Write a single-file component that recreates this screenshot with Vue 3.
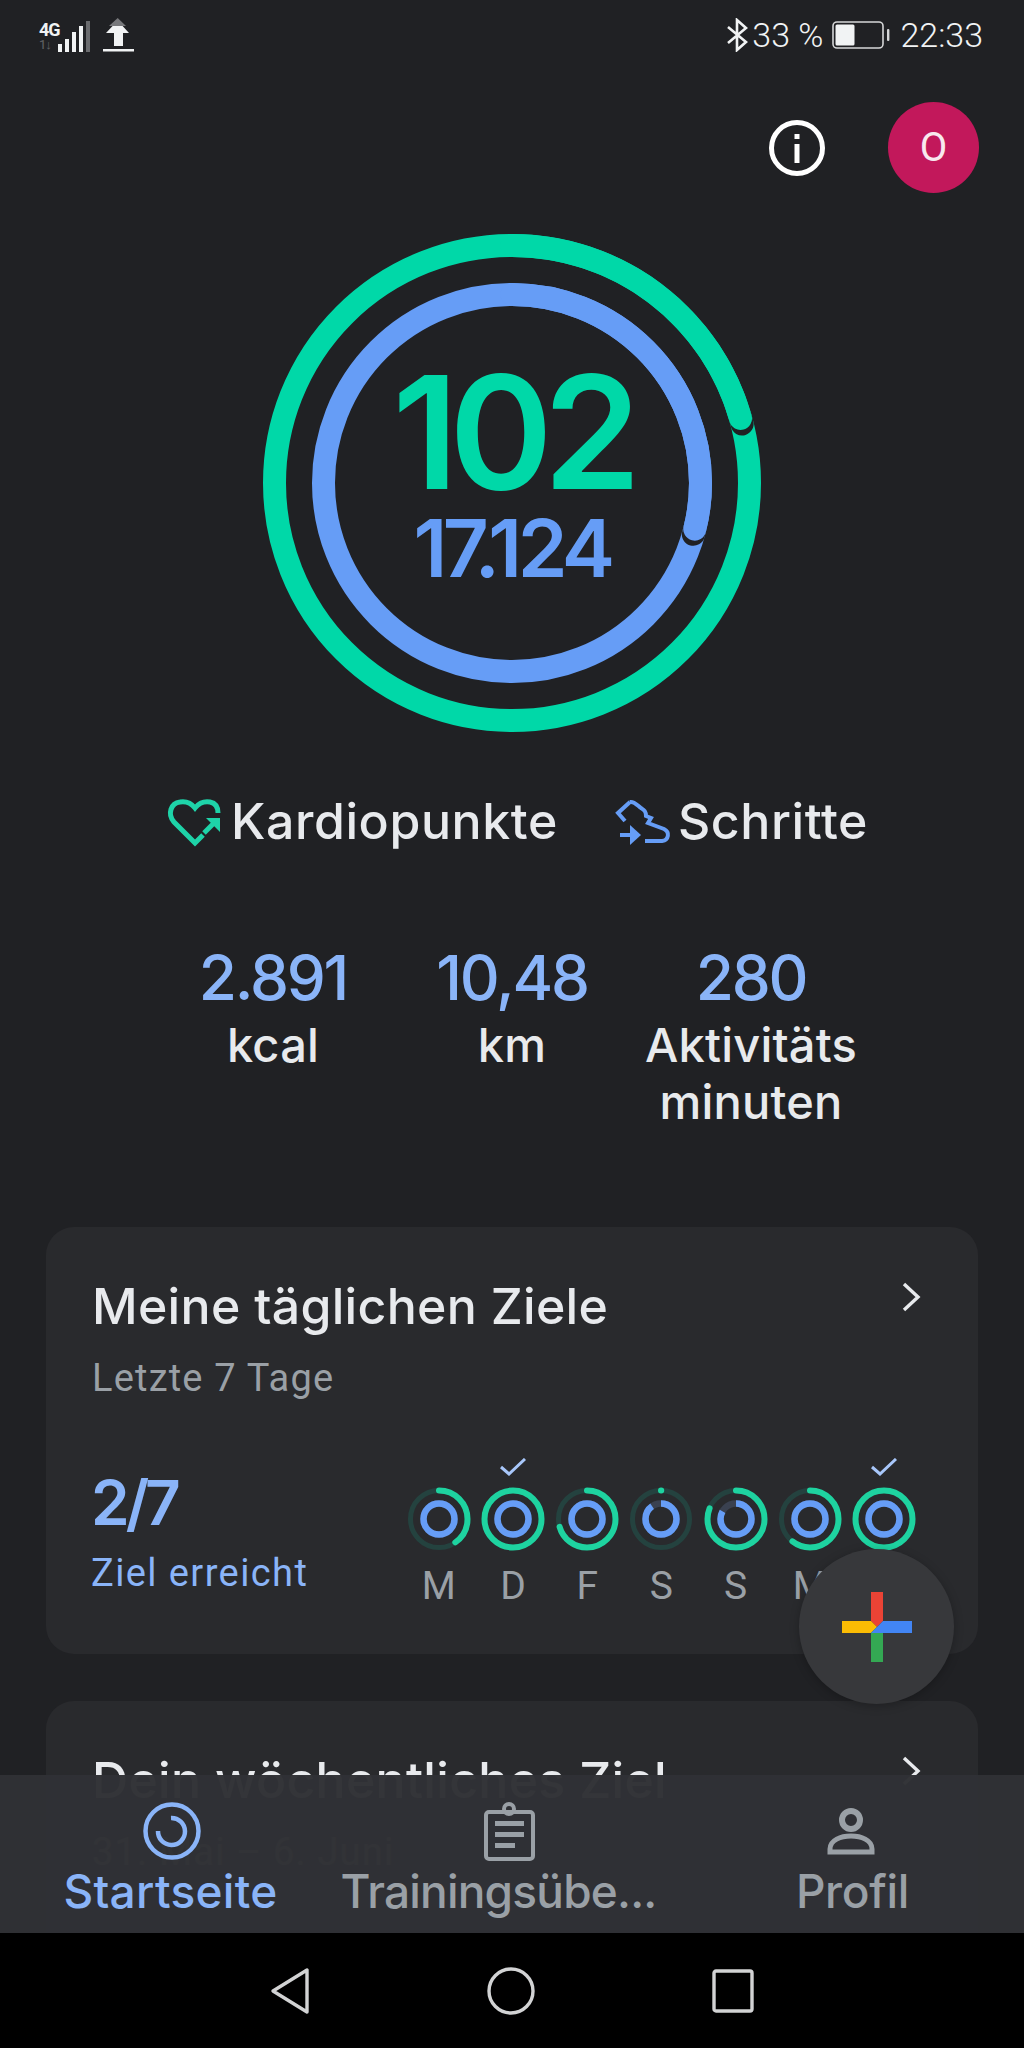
<template>
  <div class="phone">
    <div class="status">
      <div class="status-left">
        <div class="net">
          <span class="net-4g">4G</span>
          <span class="net-sim">1↓</span>
        </div>
        <div class="signal">
          <i v-for="(h, i) in signalBars" :key="i" :class="{ dim: i === 4 }" :style="{ height: h + 'px' }"></i>
        </div>
        <svg class="upload" width="34" height="36" viewBox="0 0 34 36">
          <path d="M16.7 1 L25 9 H8 Z" fill="#77787b" />
          <path d="M11.6 9 H21.6 L28 16 H22 V29 H13 V16 H5 Z" fill="#f1f3f4" />
          <rect x="2" y="32" width="31" height="2.5" fill="#f1f3f4" />
        </svg>
      </div>
      <div class="status-right">
        <svg width="22" height="34" viewBox="0 0 22 34" fill="none" stroke="#f1f3f4" stroke-width="2.6">
          <path d="M2 9 L20 24 L11 32 V2 L20 10 L2 25" />
        </svg>
        <span class="pct">33 %</span>
        <svg class="battery" width="58" height="28" viewBox="0 0 58 28">
          <rect x="1" y="1" width="50" height="26" rx="4" fill="none" stroke="#d5d6d7" stroke-width="1.6" />
          <rect x="3.5" y="3.5" width="19" height="21" rx="1.5" fill="#f1f3f4" />
          <rect x="55" y="8" width="2.4" height="12" rx="1" fill="#d5d6d7" />
        </svg>
        <span class="clock">22:33</span>
      </div>
    </div>

    <div class="header">
      <svg width="58" height="58" viewBox="0 0 58 58">
        <circle cx="29" cy="29" r="25.5" fill="none" stroke="#fff" stroke-width="5" />
        <rect x="26.5" y="25" width="5" height="19" fill="#fff" />
        <rect x="26.5" y="15" width="5" height="5" fill="#fff" />
      </svg>
      <div class="avatar">O</div>
    </div>

    <div class="hero">
      <svg width="500" height="500" viewBox="0 0 500 500" fill="none">
        <circle cx="250" cy="250" r="237.5" stroke="#00d8a8" stroke-width="23" />
        <circle cx="250" cy="250" r="188.5" stroke="#669df6" stroke-width="23" />
        <g transform="rotate(-90 250 250)" stroke-linecap="round" stroke-width="23">
          <!-- thin dark edge where the ring end sits on the lap below -->
          <circle cx="250" cy="250" r="237.5" pathLength="360" stroke="#202124" stroke-dasharray="1.4 360" stroke-dashoffset="-74.2" />
          <circle cx="250" cy="250" r="237.5" pathLength="360" stroke="#00d8a8" stroke-dasharray="74.2 360" />
          <circle cx="250" cy="250" r="188.5" pathLength="360" stroke="#202124" stroke-dasharray="1.6 360" stroke-dashoffset="-104.2" />
          <circle cx="250" cy="250" r="188.5" pathLength="360" stroke="#669df6" stroke-dasharray="104.2 360" />
        </g>
      </svg>
      <div class="hero-text">
        <div class="hero-main">102</div>
        <div class="hero-sub">17.124</div>
      </div>
    </div>

    <div class="legend">
      <div class="legend-item">
        <svg width="70" height="60" viewBox="0 0 70 60" fill="none">
          <path d="M43 44 L35 52 L14 31 C7 23 11 12 20 11 C26 10 31 12 35 17 C39 12 44 10 50 11 C55 12 58 16 58 22" stroke="#1ed3a8" stroke-width="5" />
          <path d="M44 42 L55 31" stroke="#1ed3a8" stroke-width="5" />
          <path d="M46 27 H60 V41 Z" fill="#1ed3a8" />
        </svg>
        <span>Kardiopunkte</span>
      </div>
      <div class="legend-item">
        <svg width="70" height="60" viewBox="0 0 70 60" fill="none" stroke="#669df6" stroke-width="4">
          <path d="M20 11 L8 22 L15 30 M20 11 C24 10 27 14 31 17 C34 19 36 20 36 25 L41 27 L38 32 L54 38 C60 41 59 49 52 50 L35 50" />
          <path d="M10 44 H28" />
          <path d="M20 34 L31 44 L20 54 Z" fill="#669df6" stroke="none" />
        </svg>
        <span class="legend-steps">Schritte</span>
      </div>
    </div>

    <div class="stats">
      <div v-for="s in stats" :key="s.label" class="stat">
        <div class="stat-value">{{ s.value }}</div>
        <div class="stat-label">{{ s.label }}</div>
      </div>
    </div>

    <div class="card">
      <div class="card-head">
        <div class="card-title">Meine täglichen Ziele</div>
        <svg class="chev" width="24" height="32" viewBox="0 0 24 32" fill="none" stroke="#e8eaed" stroke-width="3.4">
          <path d="M4 2 L18 15 L4 28" />
        </svg>
      </div>
      <div class="card-sub">Letzte 7 Tage</div>
      <div class="goal-row">
        <div class="goal-text">
          <div class="goal-num">2/7</div>
          <div class="goal-label">Ziel erreicht</div>
        </div>
        <div class="days">
          <div v-for="(d, i) in days" :key="i" class="day">
            <svg class="check" :class="{ off: !d.done }" width="26" height="18" viewBox="0 0 26 18" fill="none" stroke="#a8c7fa" stroke-width="3">
              <path d="M1 9 L9 16 L25 1" />
            </svg>
            <svg width="66" height="66" viewBox="0 0 66 66" fill="none">
              <circle cx="33" cy="33" r="28.5" stroke="#24423f" stroke-width="5" />
              <circle cx="33" cy="33" r="15.5" stroke="#3a4150" stroke-width="6.5" />
              <g transform="rotate(-90 33 33)">
                <circle cx="33" cy="33" r="28.5" pathLength="360" stroke="#1ed3a0" stroke-width="6" stroke-linecap="round" :stroke-dasharray="d.green + ' 360'" />
                <circle cx="33" cy="33" r="15.5" pathLength="360" stroke="#669df6" stroke-width="6.5" :stroke-dasharray="d.blue + ' 360'" />
              </g>
            </svg>
            <div class="day-label">{{ d.label }}</div>
          </div>
        </div>
      </div>
    </div>

    <div class="card card-two">
      <div class="card-head">
        <div class="card-title">Dein wöchentliches Ziel</div>
        <svg class="chev" width="24" height="32" viewBox="0 0 24 32" fill="none" stroke="#e8eaed" stroke-width="3.4">
          <path d="M4 2 L18 15 L4 28" />
        </svg>
      </div>
      <div class="card-sub">31. Mai – 6. Juni</div>
    </div>

    <div class="fab">
      <svg width="70" height="70" viewBox="0 0 70 70">
        <path d="M29 0 H41 V29 L35 35 L29 29 Z" fill="#ea4335" />
        <path d="M0 29 H29 L35 35 L29 41 H0 Z" fill="#fbbc04" />
        <path d="M29 41 L35 35 L41 41 V70 H29 Z" fill="#34a853" />
        <path d="M41 29 H70 V41 H29 L35 35 Z" fill="#4285f4" />
      </svg>
    </div>

    <div class="bottom">
      <nav class="tabs">
        <div class="tab active">
          <svg width="80" height="75" viewBox="0 0 80 75" fill="none" stroke="#8ab4f8" stroke-width="4.5">
            <circle cx="41" cy="36" r="26.5" />
            <path d="M40 23 A13.5 13.5 0 1 1 27 36" />
          </svg>
          <span>Startseite</span>
        </div>
        <div class="tab">
          <svg width="80" height="75" viewBox="0 0 80 75" fill="none" stroke="#9aa0a6" stroke-width="4">
            <rect x="14" y="17" width="47" height="47" rx="3" />
            <circle cx="37" cy="14" r="5" />
            <g fill="#9aa0a6" stroke="none">
              <rect x="23" y="26" width="29" height="5" />
              <rect x="23" y="37" width="29" height="5" />
              <rect x="23" y="48" width="20" height="5" />
            </g>
          </svg>
          <span class="tab-label-mid">Trainingsübe...</span>
        </div>
        <div class="tab">
          <svg width="80" height="75" viewBox="0 0 80 75" fill="none" stroke="#9aa0a6">
            <circle cx="38" cy="25" r="9" stroke-width="6" />
            <path d="M17 57 V54 C17 45 28 41 38 41 C48 41 59 45 59 54 V57 Z" stroke-width="5" />
          </svg>
          <span>Profil</span>
        </div>
      </nav>
      <div class="sysnav">
        <svg width="40" height="48" viewBox="0 0 40 48" fill="none" stroke="#d2d3d4" stroke-width="3.4">
          <path d="M37 3 V45 L3 24 Z" stroke-linejoin="round" />
        </svg>
        <svg width="48" height="48" viewBox="0 0 48 48" fill="none" stroke="#d2d3d4" stroke-width="3.4">
          <circle cx="24" cy="24" r="22" />
        </svg>
        <svg width="42" height="44" viewBox="0 0 42 44" fill="none" stroke="#d2d3d4" stroke-width="3.4">
          <rect x="2" y="2" width="38" height="40" rx="2" />
        </svg>
      </div>
    </div>
  </div>
</template>

<script setup>
const signalBars = [8, 13, 20, 26, 31]

const stats = [
  { value: '2.891', label: 'kcal' },
  { value: '10,48', label: 'km' },
  { value: '280', label: 'Aktivitäts minuten' }
]

const days = [
  { label: 'M', green: 145, blue: 360, done: false },
  { label: 'D', green: 360, blue: 360, done: true },
  { label: 'F', green: 254, blue: 360, done: false },
  { label: 'S', green: 0.5, blue: 325, done: false },
  { label: 'S', green: 292, blue: 300, done: false },
  { label: 'M', green: 218, blue: 360, done: false },
  { label: 'D', green: 360, blue: 360, done: true }
]
</script>

<style>
html,
body {
  background: #202124;
}
</style>

<style scoped>
.phone {
  position: relative;
  width: 1024px;
  height: 2048px;
  overflow: hidden;
  background: #202124;
  font-family: Inter, "Liberation Sans", sans-serif;
  color: #e8eaed;
}

.status {
  height: 70px;
  display: flex;
  justify-content: space-between;
  align-items: center;
  padding: 0 41px 0 39px;
  color: #f1f3f4;
  font-family: Roboto, sans-serif;
}
.status-left {
  display: flex;
  align-items: center;
}
.net {
  display: flex;
  flex-direction: column;
  width: 19px;
  height: 32px;
  margin-top: 3px;
}
.net-4g {
  font-size: 18px;
  font-weight: 700;
  line-height: 17px;
  letter-spacing: -1px;
}
.net-sim {
  font-size: 13px;
  line-height: 14px;
  letter-spacing: -1px;
  opacity: 0.3;
}
.signal {
  display: flex;
  align-items: flex-end;
  gap: 3px;
  height: 31px;
  margin-top: 3px;
}
.signal i {
  width: 4px;
  background: #f1f3f4;
}
.signal i.dim {
  background: #6b6c6f;
}
.upload {
  margin-left: 11px;
}
.status-right {
  display: flex;
  align-items: center;
  font-size: 34px;
  font-weight: 300;
}
.pct {
  margin-left: 4px;
}
.battery {
  margin-left: 9px;
}
.clock {
  margin-left: 10px;
}

.header {
  display: flex;
  justify-content: flex-end;
  align-items: center;
  gap: 62px;
  padding: 32px 45px 0 0;
}
.avatar {
  width: 91px;
  height: 91px;
  border-radius: 50%;
  background: #c2185b;
  color: #f8e8ee;
  display: flex;
  align-items: center;
  justify-content: center;
  font-family: Roboto, sans-serif;
  font-size: 40px;
}

.hero {
  position: relative;
  width: 500px;
  height: 500px;
  margin: 40px auto 0;
}
.hero svg {
  display: block;
}
.hero-text {
  position: absolute;
  inset: 0;
  display: flex;
  flex-direction: column;
  align-items: center;
  padding-top: 134px;
}
.hero-main {
  font-size: 157px;
  font-weight: 580;
  line-height: 130px;
  letter-spacing: -9.5px;
  color: #00d8a8;
}
.hero-sub {
  font-size: 80px;
  font-weight: 580;
  line-height: 80px;
  letter-spacing: -4.5px;
  color: #669df6;
  margin-top: 11px;
}

.legend {
  display: flex;
  justify-content: center;
  gap: 52px;
  margin-top: 58px;
  padding-left: 4px;
  font-size: 50px;
  font-weight: 500;
  line-height: 60px;
  letter-spacing: 0.6px;
}
.legend-item {
  display: flex;
  align-items: center;
  gap: 4px;
}
.legend-item:first-child span {
  margin-left: -3px;
}
.legend-steps {
  margin-left: -6px;
}

.stats {
  display: grid;
  grid-template-columns: repeat(3, 239px);
  justify-content: center;
  margin-top: 89px;
  text-align: center;
  font-weight: 500;
}
.stat-value {
  font-size: 62px;
  line-height: 76px;
  letter-spacing: -2.2px;
  color: #8ab4f8;
}
.stat-label {
  font-size: 47px;
  line-height: 57px;
  letter-spacing: 0.2px;
  width: 235px;
  margin: 0 auto;
}

.card {
  margin: 97px 46px 0;
  height: 427px;
  padding: 47px 46px 0;
  border-radius: 28px;
  background: #292a2d;
  box-sizing: border-box;
}
.card-two {
  margin-top: 47px;
}
.card-head {
  display: flex;
  justify-content: space-between;
  align-items: flex-start;
}
.card-title {
  font-size: 50px;
  font-weight: 500;
  line-height: 64px;
  letter-spacing: 0.3px;
}
.chev {
  margin: 8px 8px 0 0;
}
.card-sub {
  margin-top: 18px;
  font-family: Roboto, sans-serif;
  font-size: 38px;
  line-height: 44px;
  letter-spacing: 1.2px;
  color: #9aa0a6;
}
.goal-row {
  display: flex;
  justify-content: space-between;
  align-items: flex-start;
}
.goal-text {
  margin: 64px 0 0 -1px;
}
.goal-num {
  font-size: 62px;
  font-weight: 600;
  line-height: 78px;
  letter-spacing: -4px;
  color: #8ab4f8;
}
.goal-label {
  margin-top: 9px;
  font-family: Roboto, sans-serif;
  font-size: 38px;
  line-height: 44px;
  letter-spacing: 1.4px;
  color: #8ab4f8;
}
.days {
  display: flex;
  margin: 58px 11px 0 0;
}
.day {
  width: 74.2px;
  display: flex;
  flex-direction: column;
  align-items: center;
}
.check {
  margin-bottom: 10px;
}
.check.off {
  visibility: hidden;
}
.day-label {
  margin-top: 12px;
  font-family: Roboto, sans-serif;
  font-size: 39px;
  line-height: 44px;
  color: #9aa0a6;
}

.fab {
  position: absolute;
  left: 799px;
  top: 1549px;
  width: 155px;
  height: 155px;
  border-radius: 50%;
  background: #37383b;
  box-shadow: 0 2px 10px rgba(0, 0, 0, 0.25);
  display: flex;
  align-items: center;
  justify-content: center;
}

.bottom {
  position: absolute;
  left: 0;
  right: 0;
  bottom: 0;
}
.tabs {
  height: 158px;
  display: grid;
  grid-template-columns: repeat(3, 341px);
  background: rgba(48, 49, 53, 0.98);
  color: #9aa0a6;
  font-size: 46px;
  font-weight: 500;
  letter-spacing: -0.3px;
}
.tab {
  display: flex;
  flex-direction: column;
  align-items: center;
  padding-top: 20px;
}
.tab svg {
  flex: none;
  margin-bottom: -4px;
}
.tab span {
  line-height: 50px;
  white-space: nowrap;
}
.tab.active {
  color: #8ab4f8;
  letter-spacing: 0.3px;
}
.tab-label-mid {
  margin-right: 26px;
  letter-spacing: -0.8px;
}
.sysnav {
  height: 115px;
  background: #000;
  display: flex;
  justify-content: center;
  align-items: center;
  gap: 177px;
}
</style>
